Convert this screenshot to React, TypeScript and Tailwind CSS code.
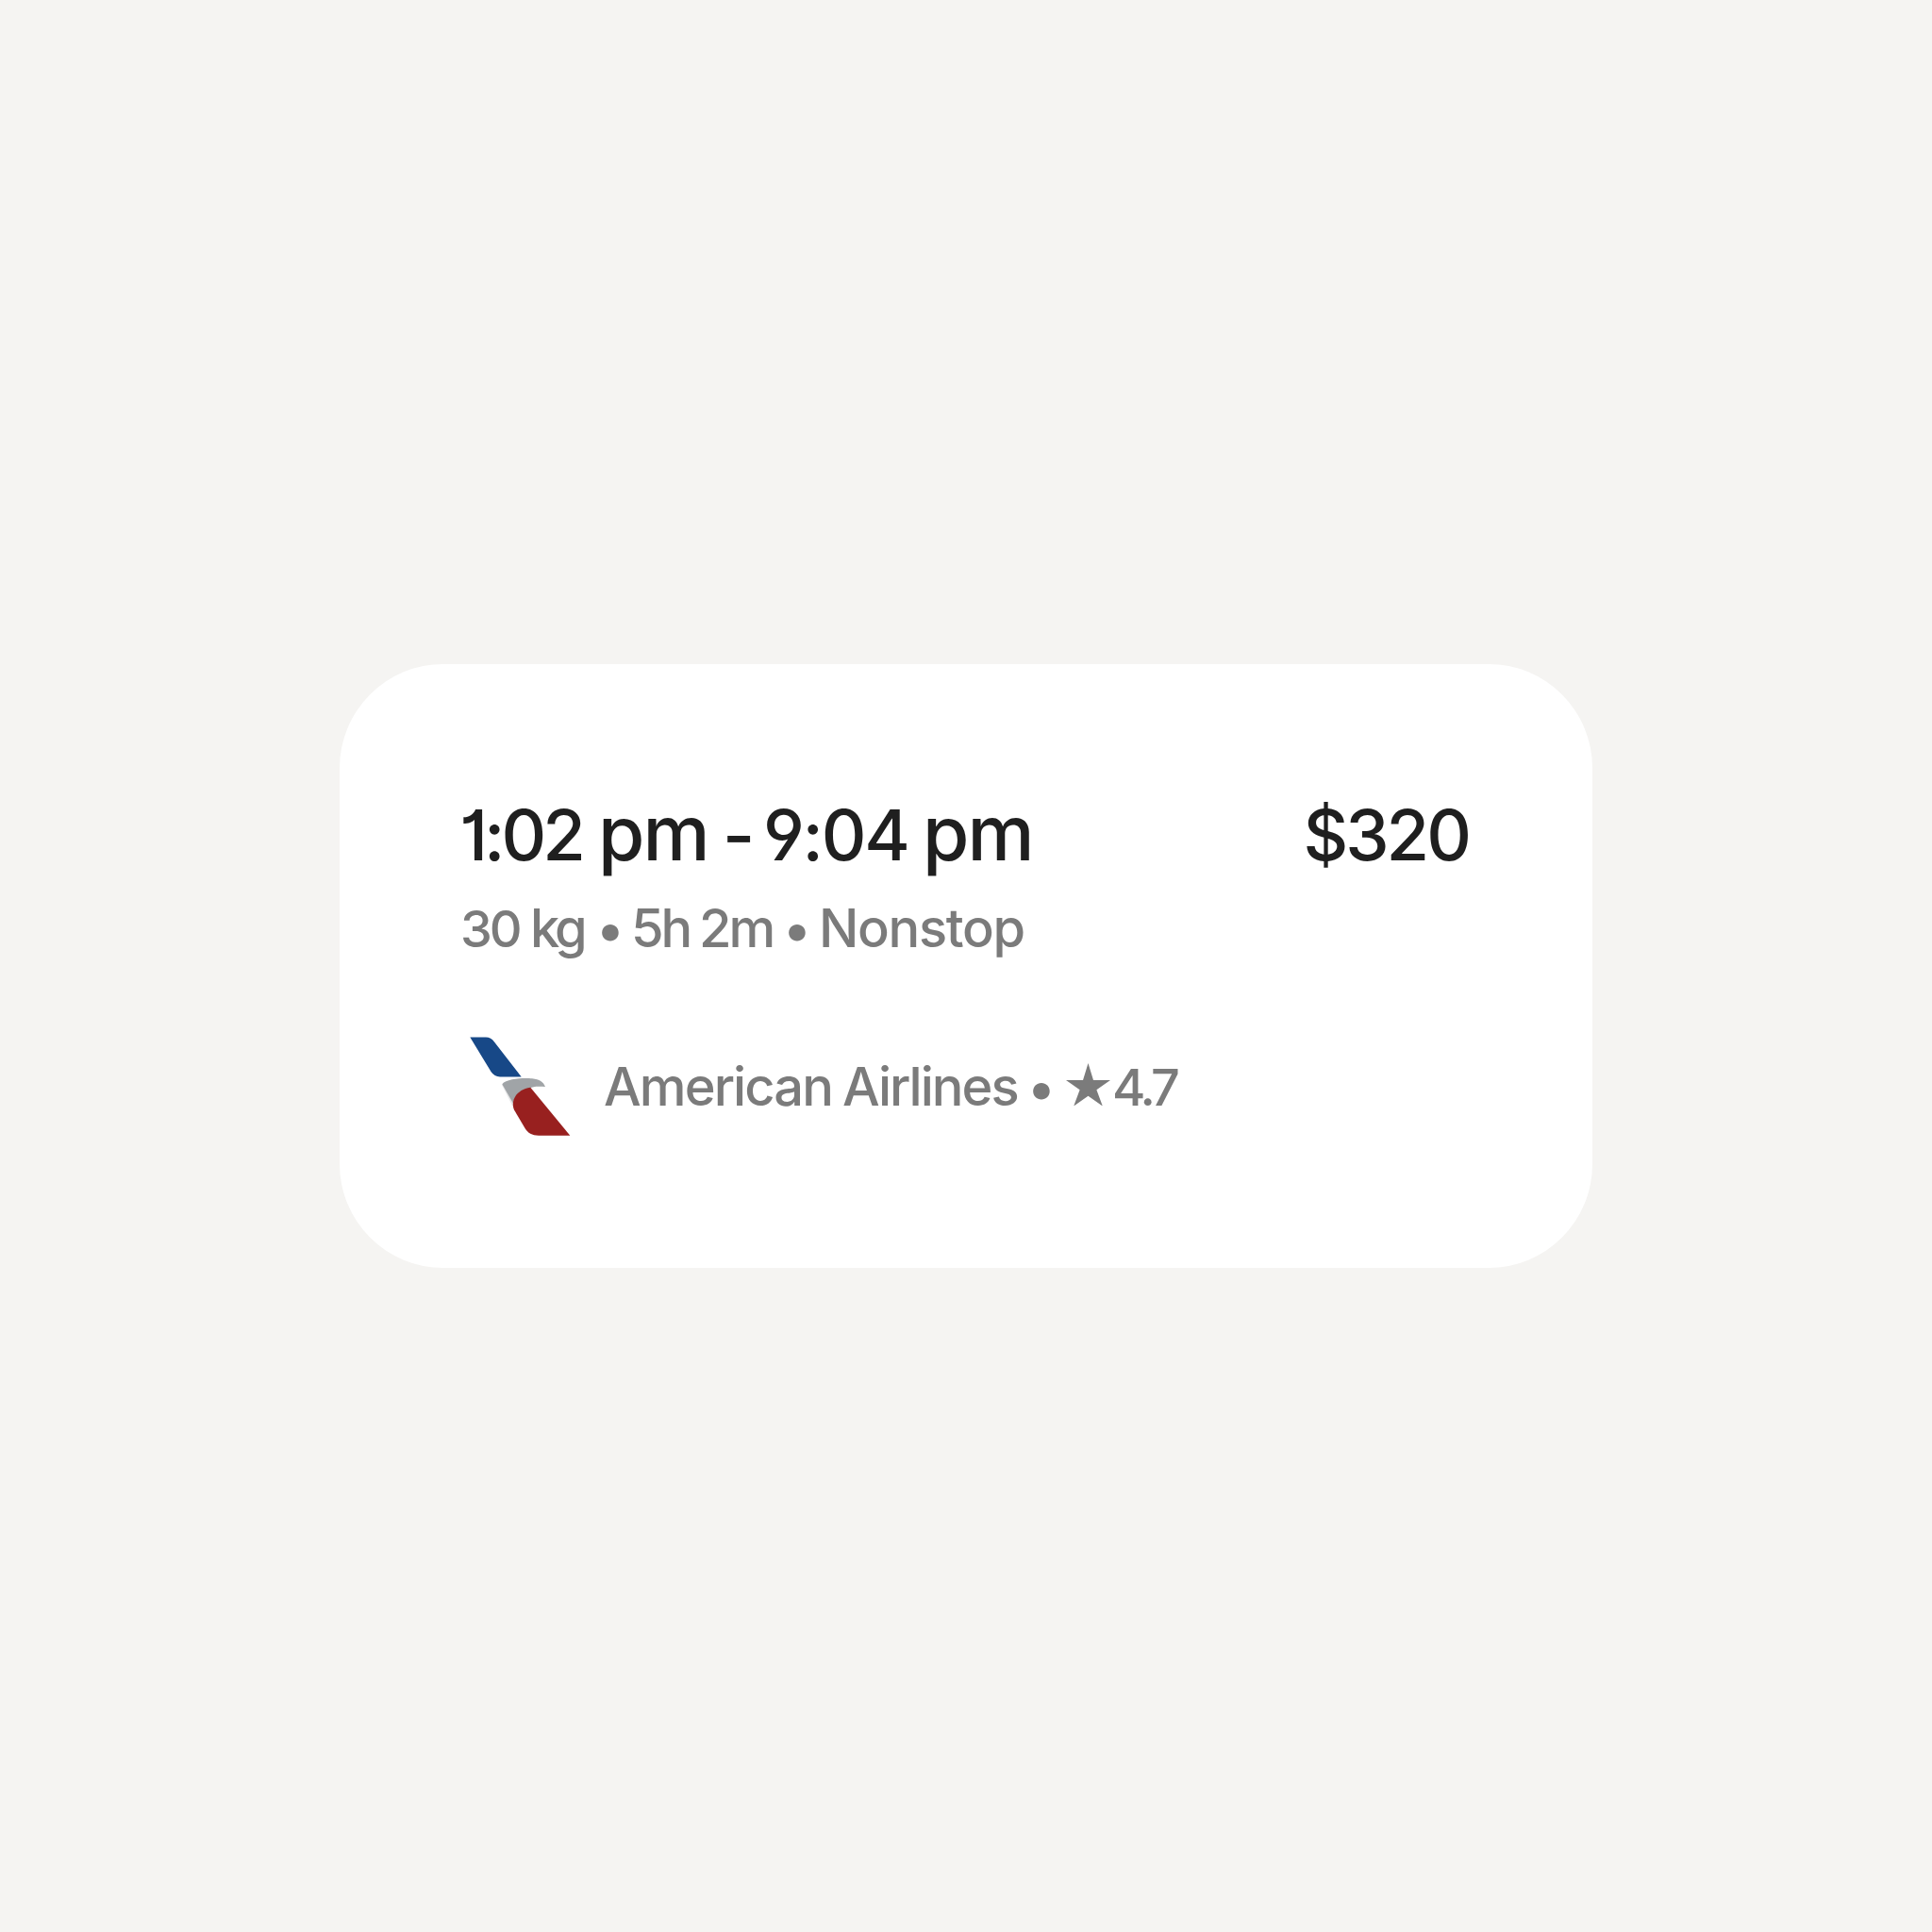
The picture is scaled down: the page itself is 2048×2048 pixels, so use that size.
function AirlineLogo() {
  return (
    <svg viewBox="0 0 140 140" className="h-[140px] w-[140px] shrink-0" aria-label="American Airlines">
      <path d="M52 70 L60 68 L66 92 H63 Z" fill="#e6e6e7" />
      <path d="M18.3 19.4 H35 Q40.500 19.4 44 24.500 L72.7 61.4 H50 Q44 61.4 40.5 56 Z" fill="#174887" />
      <path d="M52.3 69.3 C57 63 76 62.500 84 63.300 C92 64.300 96 67 98 72 C88 71.500 85 72 82 73.500 C73 76 65 82 63.900 89.500 Z" fill="#a0a4a7" />
      <path d="M82.300 72.700 L124.300 123.700 H91 C84 123.700 79.500 121 76.500 116 L65 96.500 C61 87 67 75 82.300 72.700 Z" fill="#98201f" />
    </svg>
  );
}

function Star() {
  return (
    <svg viewBox="0 0 47 45" className="mt-[27px] h-[45px] w-[47px] shrink-0" fill="currentColor" aria-label="Rating">
      <path d="M23.5 0 L29 18 H47 L32.400 28.300 L38.800 45.500 L23.500 34.800 L8.200 45.500 L14.600 28.300 L0 18 H18 Z" />
    </svg>
  );
}

export default function App() {
  return (
    <main className="flex h-[2048px] w-[2048px] items-center justify-center bg-[#f5f4f2] font-['Inter',sans-serif]">
      <article className="flex h-[640px] w-[1328px] flex-col rounded-[110px] bg-white pt-[131px] pr-[131px] pl-[128px] font-medium whitespace-nowrap text-[#7b7b7b]">
        <div className="flex h-[96px] items-baseline justify-between text-[74px] leading-[96px] text-[#1f1f1f] [font-feature-settings:'cv01','cv04']">
          <h1 className="-ml-px flex items-baseline">
            <span className="w-[147px] tracking-[-4px]">1:02</span>
            <span className="w-[132px] text-[80px] tracking-[-2px]">pm</span>
            <span className="w-[43px]">-</span>
            <span className="w-[169px] tracking-[-2.3px]">9:04</span>
            <span className="text-[80px] tracking-[-2px]">pm</span>
          </h1>
          <span className="tracking-[-3px]">$320</span>
        </div>
        <p className="mt-[13px] flex h-[80px] items-baseline text-[56px] leading-[80px]">
          <span className="w-[74px] text-[54px] tracking-[-3px]">30</span>
          <span className="w-[70px] tracking-[-4px]">kg</span>
          <span className="w-[37px] translate-y-px">•</span>
          <span className="w-[72px] tracking-[-3px]">5h</span>
          <span className="w-[89px] tracking-[-3px]">2m</span>
          <span className="w-[38px] translate-y-px">•</span>
          <span className="tracking-[-1.3px]">Nonstop</span>
        </p>
        <div className="mt-[76px] flex h-[104px] text-[56px] leading-[104px]">
          <div className="-mt-[20px] -ml-[8px] w-[160px] shrink-0">
            <AirlineLogo />
          </div>
          <span className="w-[253px] tracking-[-1.900px]">American</span>
          <span className="w-[196px] tracking-[-2px]">Airlines</span>
          <span className="w-[41px] translate-y-px">•</span>
          <Star />
          <span className="ml-[2px] translate-y-px text-[54px] tracking-[-4px]">4.7</span>
        </div>
      </article>
    </main>
  );
}
